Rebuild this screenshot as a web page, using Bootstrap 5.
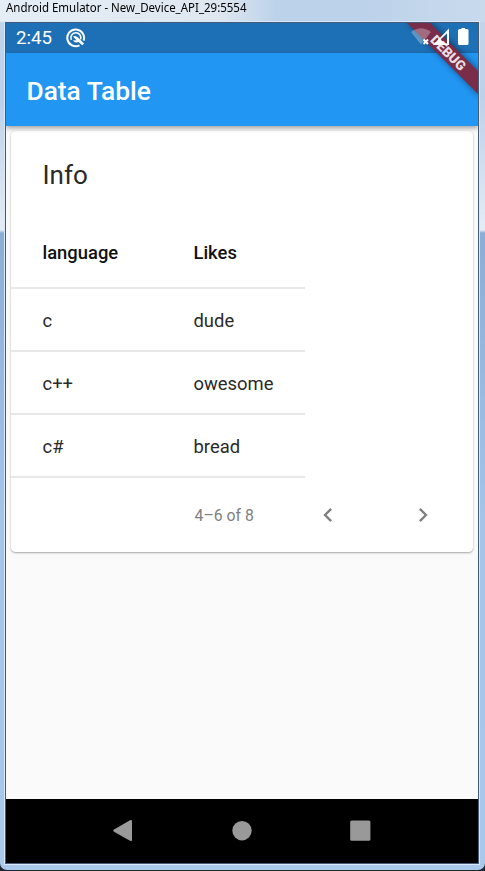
<!DOCTYPE html>
<html lang="en">
<head>
<meta charset="utf-8">
<meta name="viewport" content="width=device-width, initial-scale=1">
<title>Data Table</title>
<link href="https://cdn.jsdelivr.net/npm/bootstrap@5.3.0/dist/css/bootstrap.min.css" rel="stylesheet">
<style>
html, body { height: 871px; overflow: hidden; }
body { font-family: Roboto, "Liberation Sans", sans-serif; background: #20262e; }
.emulator { width: 485px; height: 870px; padding: 0 6px 6px 5px; border-radius: 0 0 7px 7px;
  background: linear-gradient(#c3d5ea 0, #bdd1e9 100px, #e4ecf6 230px, #8cadd5 233px, #a5c4e8 520px, #a9c8eb 100%); }
.caption-bar { height: 22px; background: linear-gradient(90deg, #e5edf6, #dfe8f1 45%, #bcd2ea 57%, #bcd2ea 75%, #c9daed); margin: 0 -6px 0 -5px; padding-left: 6px;
  font: 12px/16px "Noto Sans", sans-serif; color: #000; white-space: nowrap; }
.caption-bar span { display: inline-block; transform: scaleX(.957); transform-origin: 0 50%; }
.device { width: 474px; height: 842px; border: 1px solid #465b78; outline: 1px solid #d9e8f8; background: #fafafa; overflow: hidden; }
.status { height: 30px; background: #1e70b6; color: #fff; padding-left: 10px; font-size: 18.7px; line-height: 30px; }
.status svg { margin-left: 14px; }
.appbar { height: 73px; background: #2196f3; color: #fff; padding: 4px 0 0 20.5px; font-size: 26.3px; font-weight: 500; z-index: 1;
  box-shadow: 0 2px 5px rgba(0,0,0,.38); }
.ribbon { right: 0; top: 0; }
.panel { margin: 5px 5px 0; height: 421px; border: 0; border-radius: 4.5px; box-shadow: 0 1px 2px rgba(0,0,0,.33), 0 0 2px rgba(0,0,0,.05); background: #fff; color: #2a2a2a; }
.panel-title { height: 87px; padding-left: 31.5px; font-size: 26px; line-height: 89px; }
.grid { width: 294px; font-size: 18.4px; color: #2a2a2a; margin: 0; table-layout: fixed; border-collapse: separate; border-spacing: 0; }
.grid th, .grid td { padding: 0 0 0 31.5px; height: 63px; border-bottom: 2px solid #e8e8e8; vertical-align: middle; white-space: nowrap; }
.grid td { padding-top: 3px; }
.grid th { height: 71px; font-weight: 500; color: #111; padding-top: 1px; }
.grid th:first-child { width: 151px; }
.pager { height: 74px; padding-left: 183.5px; font-size: 15.8px; color: #808080; }
.pager .range { width: 119.5px; padding-top: 1px; }
.pager svg { width: 28px; height: 28px; fill: #808080; }
.pager .next { margin-left: 67px; }
.navkeys { height: 64px; background: #000; }
.navkeys svg { display: block; }
</style>
<script src="https://cdn.jsdelivr.net/npm/bootstrap@5.3.0/dist/js/bootstrap.bundle.min.js"></script>
</head>
<body>
<div class="emulator">
  <div class="caption-bar"><span>Android Emulator - New_Device_API_29:5554</span></div>
  <div class="device position-relative d-flex flex-column">
    <div class="status d-flex align-items-center flex-shrink-0">
      <span>2:45</span>
      <svg width="20" height="20" viewBox="0 0 20 20" fill="none" stroke="#fff">
        <path d="M13.500 17.300A8.400 8.400 0 1 1 17.600 12.600" stroke-width="2"/>
        <path d="M5.300 11.800A5 5 0 1 1 14.500 11.500" stroke-width="1.600"/>
        <path d="M7 8.500Q9.500 7 12 9.500L18 15.600 16.300 17.300 12.500 14Q9 15.300 6.800 12.500L10.500 12.300Z" fill="#fff" stroke="none"/>
      </svg>
    </div>
    <header class="appbar d-flex align-items-center position-relative flex-shrink-0"><span>Data Table</span></header>
    <svg class="ribbon position-absolute z-3" width="82" height="84" viewBox="396 23 82 84">
      <defs><filter id="soft" x="-20%" y="-20%" width="140%" height="140%"><feGaussianBlur stdDeviation="3"/></filter></defs>
      <path d="M407 22H431L480 71V97Z" fill="#000" opacity=".4" filter="url(#soft)"/>
      <path d="M407 23H430L479 72V95Z" fill="#792d49"/>
      <text transform="translate(448 53) rotate(45)" text-anchor="middle" y="4.500" font-family="Roboto, sans-serif" font-size="13.600" font-weight="900" fill="#fff" fill-opacity=".85">DEBUG</text>
      <path d="M411 32Q421 24.500 431 32L421 44.500Z" fill="#fff" opacity=".3"/>
      <path d="M423.500 39.500L428 44M428 39.500L423.500 44" stroke="#fff" stroke-width="2"/>
      <path fill="#fff" fill-rule="evenodd" d="M433 45L449 28.500V45ZM441 39V40L445 43.500H447V33.200Z"/>
      <path d="M460 29H461.500V28H465V29H467Q468.500 29 468.500 30.500V43.500Q468.500 45 467 45H459.500Q458 45 458 43.500V30.500Q458 29 460 29Z" fill="#fff"/>
    </svg>
    <main class="flex-grow-1">
      <section class="panel card">
        <div class="panel-title">Info</div>
        <table class="grid">
          <thead><tr><th>language</th><th>Likes</th></tr></thead>
          <tbody>
            <tr><td>c</td><td>dude</td></tr>
            <tr><td>c++</td><td>owesome</td></tr>
            <tr><td>c#</td><td>bread</td></tr>
          </tbody>
        </table>
        <div class="pager d-flex align-items-center">
          <span class="range">4–6 of 8</span>
          <svg viewBox="0 0 24 24"><path d="M15.410 7.410L14 6l-6 6 6 6 1.410-1.410L10.830 12z"/></svg>
          <svg class="next" viewBox="0 0 24 24"><path d="M10 6L8.590 7.410 13.170 12l-4.580 4.590L10 18l6-6z"/></svg>
        </div>
      </section>
    </main>
    <footer class="navkeys flex-shrink-0">
      <svg width="472" height="64" viewBox="6 799 472 64" fill="#999">
        <path d="M114 829.500L130 820.300Q132 819.500 132 821V840Q132 841.500 130 840.700L114 831.800Q112.300 830.600 114 829.500Z"/>
        <circle cx="242" cy="830.700" r="9.700"/>
        <rect x="350.200" y="820.500" width="20.200" height="20.200" rx="1.500"/>
      </svg>
    </footer>
  </div>
</div>
</body>
</html>
